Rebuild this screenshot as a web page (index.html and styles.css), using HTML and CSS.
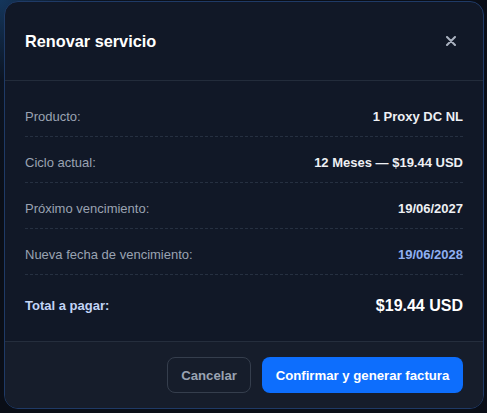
FILE: index.html
```html
<!DOCTYPE html>
<html lang="es">
<head>
<meta charset="utf-8">
<title>Renovar servicio</title>
<link rel="stylesheet" href="styles.css">
</head>
<body>
<div class="backdrop">
  <div class="modal">
    <div class="modal-header">
      <h2 class="modal-title">Renovar servicio</h2>
      <button class="close" aria-label="Cerrar">
        <svg width="10" height="10" viewBox="0 0 10 10"><path d="M1 1L9 9M9 1L1 9" stroke="#aab2c0" stroke-width="2" stroke-linecap="round"/></svg>
      </button>
    </div>
    <div class="modal-body">
      <div class="row"><span class="label">Producto:</span><span class="value">1 Proxy DC NL</span></div>
      <div class="row"><span class="label">Ciclo actual:</span><span class="value">12 Meses — $19.44 USD</span></div>
      <div class="row"><span class="label">Próximo vencimiento:</span><span class="value">19/06/2027</span></div>
      <div class="row"><span class="label">Nueva fecha de vencimiento:</span><span class="value value-blue">19/06/2028</span></div>
      <div class="row row-total"><span class="label-total">Total a pagar:</span><span class="value-total">$19.44 USD</span></div>
    </div>
    <div class="modal-footer">
      <button class="btn btn-cancel">Cancelar</button>
      <button class="btn btn-primary">Confirmar y generar factura</button>
    </div>
  </div>
</div>
</body>
</html>
```

FILE: styles.css
```css
* { box-sizing: border-box; }
html, body { margin: 0; padding: 0; }
body {
  font-family: "Liberation Sans", Arial, sans-serif;
  background: #0a0e17;
  width: 487px;
  height: 413px;
  overflow: hidden;
}
.backdrop {
  width: 487px;
  height: 413px;
  padding: 1px 3px 4px 4px;
  background: radial-gradient(circle at 0 0, #14365c 0, #0c1422 80px, #0a0e17 200px);
}
.modal {
  width: 480px;
  height: 408px;
  background: #111827;
  border: 1px solid #1f3a66;
  border-radius: 14px;
  overflow: hidden;
  display: flex;
  flex-direction: column;
}
.modal-header {
  height: 79px;
  flex: none;
  display: flex;
  align-items: center;
  justify-content: space-between;
  padding: 0 26px 0 20px;
  border-bottom: 1px solid #232c3b;
}
.modal-title {
  margin: 0;
  font-size: 16.3px;
  font-weight: 700;
  color: #ffffff;
}
.close {
  background: none;
  border: 0;
  padding: 0;
  width: 12px;
  height: 12px;
  display: flex;
  align-items: center;
  justify-content: center;
  cursor: pointer;
}
.modal-body {
  flex: 1;
  padding: 10px 20px 0 20px;
}
.row {
  display: flex;
  justify-content: space-between;
  align-items: center;
  padding: 18px 0 11px 0;
  line-height: 16px;
  border-bottom: 1px dashed #263041;
  font-size: 13px;
}
.label { color: #9aa3b2; }
.value { color: #eef0f4; font-weight: 600; }
.value-blue { color: #8fb0f2; }
.row-total {
  border-bottom: 0;
  padding-top: 21px;
  line-height: 19px;
}
.label-total {
  color: #c2d4f7;
  font-weight: 700;
  font-size: 13px;
}
.value-total {
  color: #ffffff;
  font-weight: 700;
  font-size: 16px;
}
.modal-footer {
  flex: none;
  height: 67px;
  background: #161d2b;
  border-top: 1px solid #252e3d;
  display: flex;
  justify-content: flex-end;
  align-items: flex-start;
  gap: 11px;
  padding: 15px 20px 0 20px;
}
.btn {
  font-family: "Liberation Sans", Arial, sans-serif;
  font-size: 13.2px;
  font-weight: 700;
  height: 36px;
  border-radius: 8px;
  cursor: pointer;
}
.btn-cancel {
  width: 84px;
  background: transparent;
  border: 1px solid #353e4d;
  color: #9aa3b2;
}
.btn-primary {
  width: 201px;
  background: #0d6efd;
  border: 0;
  color: #ffffff;
}
```
